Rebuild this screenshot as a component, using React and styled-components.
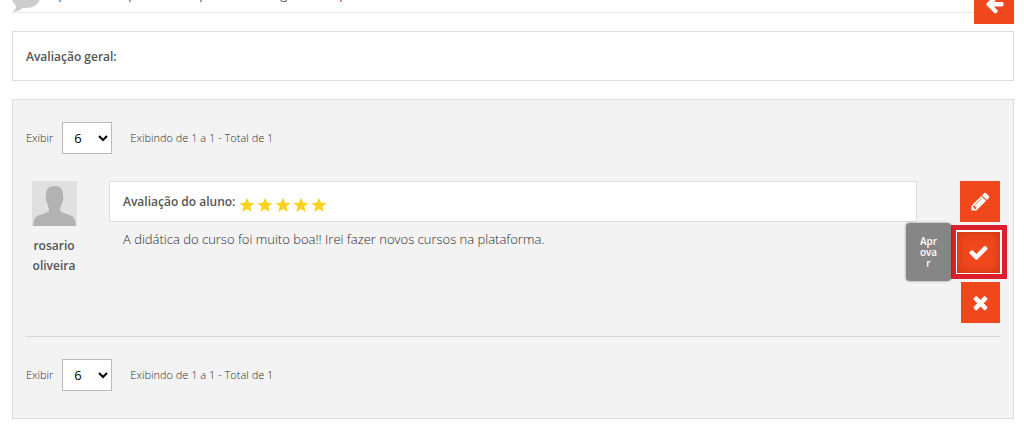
import React, { useState } from "react";
import styled, { createGlobalStyle } from "styled-components";

const EstiloGlobal = createGlobalStyle`
  *, *::before, *::after {
    box-sizing: border-box;
  }
  body {
    margin: 0;
    background-color: #fff;
    color: #2c2c2c;
    font-family: "Open Sans", "Noto Sans", sans-serif;
    font-size: 13px;
    font-weight: 300;
    line-height: 20px;
  }
`;

//#region Estilo Página
const Pagina = styled.main`
  display: flex;
  flex-direction: column;
  gap: 18px;
  padding: 0 10px 15px 12px;
`;

const Cabecalho = styled.header`
  position: relative;
  display: flex;
  align-items: flex-end;
  gap: 10px;
  height: 13px;
  border-bottom: 1px solid #e8e8e8;
`;

const Descricao = styled.p`
  margin: 0 0 8px;
  color: #555;
  font-weight: 400;
`;

const Botao = styled.button`
  display: flex;
  align-items: center;
  justify-content: center;
  width: ${(props) => props.$largura || 40}px;
  height: 41px;
  padding: 0;
  border: none;
  background-color: #f1471d;
  color: #fff;
  box-shadow: ${(props) => (props.$ativo ? "inset 0 0 10px rgba(120, 30, 0, 0.4)" : "none")};

  &:hover {
    cursor: pointer;
  }
`;

const BotaoVoltar = styled(Botao)`
  position: absolute;
  right: 0;
  bottom: -12px;
`;

const Resumo = styled.section`
  padding: 15px 13px 13px;
  border: 1px solid #ddd;
`;

const Titulo = styled.h2`
  margin: 0;
  color: #555;
  font-size: 12px;
  font-weight: 600;
  line-height: 20px;
`;

const Painel = styled.section`
  padding: 22px 13px 27px;
  border: 1px solid #ddd;
  background-color: #f3f3f3;
`;
//#endregion

//#region Estilo Paginação
const BarraPaginacao = styled.div`
  display: flex;
  align-items: center;
  gap: 18px;
  font-size: 11px;
`;

const Rotulo = styled.label`
  display: flex;
  align-items: center;
  gap: 9px;
`;

const Seletor = styled.select`
  width: 50px;
  height: 32px;
  padding: 0 0 0 7px;
  border: 1px solid #bbb;
  border-radius: 0;
  background-color: #fff;
  color: #000;
  font-family: inherit;
  font-size: 13px;
`;
//#endregion

//#region Estilo Avaliação
const Avaliacao = styled.article`
  display: flex;
  align-items: flex-start;
  margin: 27px 0 22px;
  padding-bottom: 13px;
  border-bottom: 1px solid #d8d8d8;
`;

const Aluno = styled.div`
  display: flex;
  flex-direction: column;
  align-items: center;
  gap: 10px;
  width: 56px;
  margin-right: 27px;
`;

const Nome = styled.strong`
  color: #555;
  font-size: 12px;
  font-weight: 600;
  text-align: center;
`;

const Conteudo = styled.div`
  flex: 1;
`;

const Nota = styled.div`
  display: flex;
  align-items: center;
  gap: 4px;
  height: 41px;
  padding: 0 13px;
  border: 1px solid #ddd;
  background-color: #fff;
`;

const Estrelas = styled.div`
  display: flex;
  gap: 2px;
  padding-top: 7px;
`;

const Comentario = styled.p`
  margin: 7px 14px;
`;

const Acoes = styled.div`
  display: flex;
  flex-direction: column;
  align-items: flex-end;
  gap: 3px;
  width: 83px;
`;

const Destaque = styled.div`
  position: relative;
  margin-right: -7px;
  padding: 2px 2px 1px 1px;
  border: 5px solid #dc1f2e;
  background-color: #fff;
`;

const Dica = styled.span`
  position: absolute;
  top: -7px;
  right: 100%;
  display: flex;
  align-items: center;
  width: 45px;
  height: 58px;
  margin-right: 5px;
  padding: 0 13px;
  border-radius: 4px;
  background-color: #868686;
  box-shadow: 0 0 3px rgba(0, 0, 0, 0.4);
  color: #fff;
  font-size: 10px;
  font-weight: 600;
  line-height: 11px;
  text-align: center;
  word-break: break-all;
`;
//#endregion

const desenhos = {
  voltar:
    "M1664 896v128q0 53-32.5 90.5t-84.5 37.5h-704l293 294q38 36 38 90t-38 90l-75 76q-37 37-90 37-52 0-91-37l-651-652q-37-37-37-90 0-52 37-91l651-650q38-38 91-38 52 0 90 38l75 74q38 38 38 91t-38 91l-293 293h704q52 0 84.5 37.5t32.5 90.5z",
  editar:
    "M491 1536l91-91-235-235-91 91v107h128v128h107zm523-928q0-22-22-22-10 0-17 7l-542 542q-7 7-7 17 0 22 22 22 10 0 17-7l542-542q7-7 7-17zm-54-192l416 416-832 832h-416v-416zm683 96q0 53-37 90l-166 166-416-416 166-165q36-38 90-38 53 0 91 38l235 234q37 39 37 91z",
  aprovar:
    "M1671 566q0 40-28 68l-724 724-136 136q-28 28-68 28t-68-28l-136-136-362-362q-28-28-28-68t28-68l136-136q28-28 68-28t68 28l294 295 656-657q28-28 68-28t68 28l136 136q28 28 28 68z",
  excluir:
    "M1490 1322q0 40-28 68l-136 136q-28 28-68 28t-68-28l-294-294-294 294q-28 28-68 28t-68-28l-136-136q-28-28-28-68t28-68l294-294-294-294q-28-28-28-68t28-68l136-136q28-28 68-28t68 28l294 294 294-294q28-28 68-28t68 28l136 136q28 28 28 68t-28 68l-294 294 294 294q28 28 28 68z",
};

function Icone({ nome, tamanho = 21 }) {
  return (
    <svg width={tamanho} height={tamanho} viewBox="0 0 1792 1792" fill="currentColor" aria-hidden="true">
      <path d={desenhos[nome]} />
    </svg>
  );
}

function Balao() {
  return (
    <svg width="28" height="28" viewBox="0 0 28 28" fill="#ccc" aria-hidden="true">
      <path d="M14 2C6.300 2 0 7 0 13.500c0 3.600 1.600 6.500 4.500 8.500C4 24.500 2.500 26.500 .5 28c4.500-.3 8-1.800 10.300-4.300 1 .2 2 .3 3.200.3 7.700 0 14-4.500 14-10.500S21.700 2 14 2z" />
    </svg>
  );
}

function Avatar() {
  return (
    <svg width="45" height="45" viewBox="0 0 45 45" role="img" aria-label="Foto do aluno">
      <rect width="45" height="45" fill="#e0e0e0" />
      <path
        fill="#b2b2b2"
        d="M22.500 5C17 5 14 8 14 13v3c-1 .5-.5 4 1 5 .5 3 1 5 2 6.500V30c-3 2.500-8 3-12 5-2.500 1.500-3.500 5-3.800 10h42.600c-.3-5-1.300-8.500-3.800-10-4-2-9-2.500-12-5v-2.500c1-1.500 1.500-3.500 2-6.500 1.500-1 2-4.500 1-5v-3c0-5-3-8-8.500-8z"
      />
    </svg>
  );
}

function Estrela() {
  return (
    <svg width="16" height="16" viewBox="0 0 16 16" fill="#fad21e" aria-hidden="true">
      <path d="M8 .5l2 5.200 5.500.3-4.200 3.500 1.400 5.400L8 11.900l-4.700 3 1.400-5.400L.5 6l5.500-.3z" />
    </svg>
  );
}

function Paginacao({ id, quantidade, aoMudar }) {
  return (
    <BarraPaginacao>
      <Rotulo htmlFor={id}>
        Exibir
        <Seletor id={id} value={quantidade} onChange={(evento) => aoMudar(evento.target.value)}>
          <option>6</option>
          <option>12</option>
          <option>24</option>
        </Seletor>
      </Rotulo>
      <span>Exibindo de 1 a 1 - Total de 1</span>
    </BarraPaginacao>
  );
}

function App() {
  const [quantidade, setQuantidade] = useState("6");

  return (
    <>
      <EstiloGlobal />
      <Pagina>
        <Cabecalho>
          <Balao />
          <Descricao>Aprove ou reprove os depoimentos registrados pelos alunos.</Descricao>
          <BotaoVoltar type="button" aria-label="Voltar">
            <Icone nome="voltar" />
          </BotaoVoltar>
        </Cabecalho>

        <Resumo>
          <Titulo>Avaliação geral:</Titulo>
        </Resumo>

        <Painel>
          <Paginacao id="exibir-topo" quantidade={quantidade} aoMudar={setQuantidade} />
          <Avaliacao>
            <Aluno>
              <Avatar />
              <Nome>rosario oliveira</Nome>
            </Aluno>
            <Conteudo>
              <Nota>
                <Titulo>Avaliação do aluno:</Titulo>
                <Estrelas role="img" aria-label="5 estrelas">
                  {[1, 2, 3, 4, 5].map((valor) => (
                    <Estrela key={valor} />
                  ))}
                </Estrelas>
              </Nota>
              <Comentario>
                A didática do curso foi muito boa!! Irei fazer novos cursos na plataforma.
              </Comentario>
            </Conteudo>
            <Acoes>
              <Botao type="button" aria-label="Editar">
                <Icone nome="editar" />
              </Botao>
              <Destaque>
                <Dica role="tooltip" id="dica-aprovar">Aprovar</Dica>
                <Botao type="button" $largura={43} $ativo aria-label="Aprovar" aria-describedby="dica-aprovar">
                  <Icone nome="aprovar" />
                </Botao>
              </Destaque>
              <Botao type="button" $largura={39} aria-label="Excluir">
                <Icone nome="excluir" />
              </Botao>
            </Acoes>
          </Avaliacao>
          <Paginacao id="exibir-rodape" quantidade={quantidade} aoMudar={setQuantidade} />
        </Painel>
      </Pagina>
    </>
  );
}

export default App;
